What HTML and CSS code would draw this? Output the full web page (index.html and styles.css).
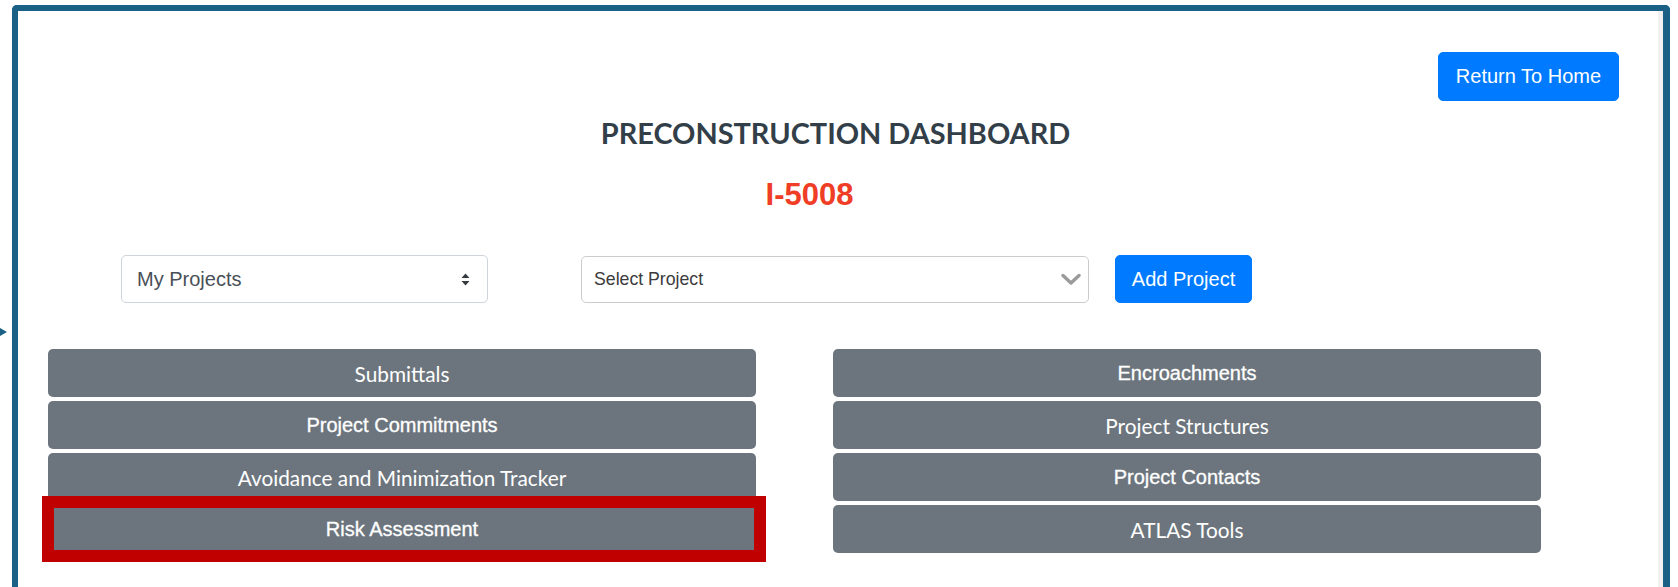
FILE: index.html
```html
<!DOCTYPE html>
<html lang="en">
<head>
<meta charset="utf-8">
<title>Preconstruction Dashboard</title>
<link rel="stylesheet" href="styles.css">
</head>
<body>
  <span class="nav-pointer"></span>
  <div class="frame">
    <div class="topbar">
      <button class="btn btn-primary btn-home" type="button">Return To Home</button>
    </div>

    <h1 class="page-title">PRECONSTRUCTION DASHBOARD</h1>
    <h2 class="project-id">I-5008</h2>

    <div class="picker-row">
      <div class="custom-select">
        <span class="select-text">My Projects</span>
        <svg class="updown" width="9" height="13" viewBox="0 0 9 13" aria-hidden="true">
          <path d="M4.5 0.5 L8.5 5 L0.5 5 Z M4.5 12.5 L0.5 8 L8.5 8 Z" fill="#343a40"/>
        </svg>
      </div>
      <div class="project-select">
        <span class="select-text">Select Project</span>
        <svg class="chevron" width="20" height="13" viewBox="0 0 20 13" aria-hidden="true">
          <polyline points="2,2.5 10,10 18,2.5" fill="none" stroke="#9a9a9a" stroke-width="3.4" stroke-linecap="round" stroke-linejoin="round"/>
        </svg>
      </div>
      <button class="btn btn-primary btn-add" type="button">Add Project</button>
    </div>

    <div class="module-grid">
      <div class="module-col">
        <a class="module-btn face-lato" href="#">Submittals</a>
        <a class="module-btn face-arial" href="#">Project Commitments</a>
        <a class="module-btn face-lato" href="#">Avoidance and Minimization Tracker</a>
        <a class="module-btn face-arial is-flagged" href="#">Risk Assessment<span class="flag-box"></span></a>
      </div>
      <div class="module-col">
        <a class="module-btn face-arial" href="#">Encroachments</a>
        <a class="module-btn face-lato" href="#">Project Structures</a>
        <a class="module-btn face-arial" href="#">Project Contacts</a>
        <a class="module-btn face-lato" href="#">ATLAS Tools</a>
      </div>
    </div>
  </div>
</body>
</html>
```

FILE: styles.css
```css
* {
  box-sizing: border-box;
}

html,
body {
  margin: 0;
  padding: 0;
  background: #ffffff;
  overflow: hidden;
}

body {
  position: relative;
  font-family: "Liberation Sans", Arial, sans-serif;
  width: 1678px;
  height: 587px;
}

/* small marker pointing at the frame from the left */
.nav-pointer {
  position: absolute;
  left: 0;
  top: 328px;
  width: 0;
  height: 0;
  border-left: 7px solid #1b6185;
  border-top: 4px solid transparent;
  border-bottom: 4px solid transparent;
}

/* framed application window, open at the bottom */
.frame {
  margin: 5px 0 0 12px;
  width: 1658px;
  height: 582px;
  overflow: hidden;
  border: 6px solid #1b6185;
  border-right-width: 7px;
  border-bottom: none;
  border-radius: 5px 5px 0 0;
  background: #ffffff;
  box-shadow: inset -5px 0 0 #f1f1f1;
  display: flex;
  flex-direction: column;
}

.topbar {
  display: flex;
  justify-content: flex-end;
  padding: 41px 44px 0 0;
}

.btn {
  font-family: "Liberation Sans", Arial, sans-serif;
  font-size: 20px;
  border: 1px solid transparent;
  border-radius: 5px;
  padding: 0 16px;
  cursor: pointer;
}

.btn-primary {
  background: #007bff;
  border-color: #007bff;
  color: #ffffff;
}

.btn-home {
  height: 49px;
  line-height: 47px;
  width: 181px;
}

.page-title {
  margin: 15px 0 0;
  padding-right: 10px;
  text-align: center;
  font-family: Lato, "Open Sans", sans-serif;
  font-weight: 700;
  font-size: 28.9px;
  line-height: 34px;
  color: #323e48;
}

.project-id {
  margin: 27px 0 0;
  padding-right: 62px;
  text-align: center;
  font-family: "Liberation Sans", Arial, sans-serif;
  font-weight: 700;
  font-size: 31px;
  line-height: 36px;
  color: #ef3d26;
}

.picker-row {
  display: flex;
  align-items: center;
  margin-top: 42px;
  padding-left: 103px;
  height: 48px;
}

.custom-select {
  width: 367px;
  height: 48px;
  border: 1px solid #ced4da;
  border-radius: 5px;
  display: flex;
  align-items: center;
  justify-content: space-between;
  padding: 0 17px 0 15px;
  color: #495057;
  font-size: 20px;
}

.project-select {
  margin-left: 93px;
  width: 508px;
  height: 47px;
  border: 1px solid #cccccc;
  border-radius: 5px;
  display: flex;
  align-items: center;
  justify-content: space-between;
  padding: 0 7px 0 12px;
  color: #3b3b3b;
  font-size: 17.7px;
}

.select-text {
  white-space: nowrap;
}

.btn-add {
  margin-left: 26px;
  height: 48px;
  width: 137px;
  line-height: 46px;
  padding: 0;
}

.module-grid {
  margin-top: 46px;
  padding-left: 30px;
  display: grid;
  grid-template-columns: 708px 708px;
  column-gap: 77px;
}

.module-col {
  display: flex;
  flex-direction: column;
  gap: 4px;
}

.module-btn {
  position: relative;
  height: 48px;
  display: flex;
  align-items: center;
  justify-content: center;
  background: #6c757d;
  color: #ffffff;
  border-radius: 5px;
  text-decoration: none;
}

.face-lato {
  font-family: Lato, "Open Sans", sans-serif;
  font-size: 20.8px;
}

.face-arial {
  font-family: "Liberation Sans", Arial, sans-serif;
  font-size: 20px;
  -webkit-text-stroke: 0.3px #ffffff;
}

/* highlight outline drawn on top of a module button */
.flag-box {
  position: absolute;
  top: -9px;
  left: -6px;
  right: -10px;
  bottom: -9px;
  border: 12px solid #c00000;
  pointer-events: none;
}
```
